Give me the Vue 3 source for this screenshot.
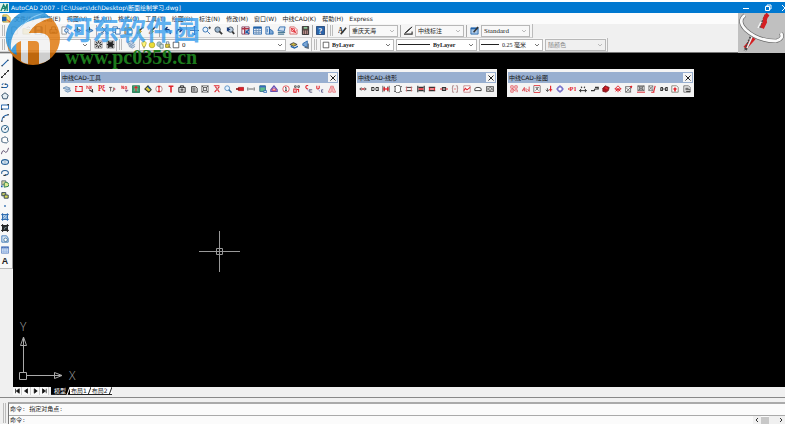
<script setup>
import { h, ref } from 'vue'

const K = '#333', R = '#e0242c', B = '#1c5fa8', L = '#7ba7d6', G = '#3c9a48', Y = '#d9c520', W = '#fff', S = '#8a8a8a'

/* Each glyph is a list of strokes [d, stroke, fill, width] or letters { t, x, y, c, s } on a 10 x 10 grid. */
const glyphs = {
  app: [['M0 0H10V10H0Z', 'none', '#dff3ea'], ['M1 9L4 2L6 6M3 6H7M5 9L8 1V9', '#16836f', 'none', 1.5]],
  doc: [['M1 1H6L9 4V9H1Z', '#b59b2a', '#f6df7a'], ['M0 3H5V8H0Z', 'none', B], ['M5 6L9 9', R]],
  new: [['M2 1H6L8 3V9H2Z', S, W]],
  open: [['M1 3H4L5 4H9V9H1Z', '#9a8420', '#f0d768'], ['M5 2Q7 0 9 2', K]],
  save: [['M1 1H9V9H1Z', '#24405f', '#6f93bd'], ['M3 1H7V4H3ZM3 6H7V9H3Z', 'none', W]],
  print: [['M1 4H9V8H1Z', K, '#ccc'], ['M3 4V1H7V4M3 7H7', K, W]],
  preview: [['M1 1H6V9H1Z', S, W], ['M8 5A2 2 0 1 1 4 5A2 2 0 1 1 8 5M8 7L9.5 9', B, '#cfe4f7']],
  publish: [['M1 5L5 3L9 5L5 7Z', B, L], ['M5 1V5', K]],
  cut: [['M2 1L7 7M8 1L3 7', K], ['M1 8A1.2 1.2 0 1 1 3.4 8A1.2 1.2 0 1 1 1 8M6.6 8A1.2 1.2 0 1 1 9 8A1.2 1.2 0 1 1 6.6 8', B]],
  copy: [['M1 1H6V7H1Z', B, W], ['M4 3H9V9H4Z', B, W]],
  paste: [['M1 2H8V9H1Z', '#8a6b20', '#dcb863'], ['M4 4H9V9H4Z', B, W]],
  brush: [['M8 1L4 5', K, 'none', 1.5], ['M4 4L6 6L3 9L1 8Z', '#a67c1b', '#edc24a']],
  undo: [['M8 9Q9 3 3 4M5 1L2 4L5 7', '#153a80', 'none', 1.5]],
  redo: [['M2 9Q1 3 7 4M5 1L8 4L5 7', '#153a80', 'none', 1.5]],
  pan: [['M5 0V10M0 5H10M3 2L5 0L7 2M3 8L5 10L7 8', B]],
  zoomrt: [['M6.5 4A2.7 2.7 0 1 1 1 4A2.7 2.7 0 1 1 6.5 4M6 6L9 9', B, '#e6f3ff'], ['M7 2H10M8.5 0.5V3.5', K]],
  zoomw: [['M7 4A3 3 0 1 1 1 4A3 3 0 1 1 7 4', '#345', '#9bb5cd'], ['M6 6L9 9', K, 'none', 2]],
  zoomp: [['M8 4A3 3 0 1 1 2 4A3 3 0 1 1 8 4', '#345', '#bcd'], ['M7 6L9 9', K, 'none', 2], ['M1 1L5 4L1 6Z', 'none', '#153a80']],
  props: [['M1 1H9V9H1Z', '#735', W], ['M1 3H9M4 1V9', '#a34', 'none', 1.5], ['M5 5L9 9M5 8L9 4', B, 'none', 1.5]],
  grid: [['M0.5 1H9.5V9H0.5Z', B, '#e6effa'], ['M1 2H9', B, 'none', 2], ['M3.5 2V9M6.5 2V9M1 5H9M1 7H9', '#688db5']],
  palette: [['M1 1H5V9H1Z', B, '#dae8f7'], ['M5 3L9 6V9H5Z', B, '#7ba7d6'], ['M2.5 3V7', B]],
  sheet: [['M1 5L3 1H9L8 6Z', B, '#cde'], ['M1 7H9M1 9H8', '#4c7b95', 'none', 1.5]],
  markup: [['M1 1H6L9 4V9H1Z', '#c66', '#ffe8e8'], ['M3 3H6V6H3ZM2 2L8 8M8 5L5 8', R]],
  calc: [['M1.5 0.5H8.5V9.5H1.5Z', '#222', '#594a44'], ['M3 2H7', '#8cc99a', 'none', 2], ['M3 5V9M5 5V9M7 5V9', '#c99', 'none', 1]],
  help: [['M0.5 0.5H9.5V9.5H0.5Z', '#173c70', '#2b65aa'], { t: '?', x: 2.5, y: 8.5, c: W, s: 9 }],
  style: [{ t: 'A', x: 0, y: 8, c: K, s: 8 }, ['M9 2L5 7L3 9', K, 'none', 1.8]],
  dimstyle: [['M0 9H9V6', K, 'none', 1.3], ['M9 1L4 6L1 8L5 4Z', K, K]],
  tstyle: [['M1 2H9V9H1Z', B, '#a9c9e9'], ['M1 3H9', B, 'none', 1.4], ['M9 1L4 7', K, 'none', 1.7]],
  gear: [['M1 1H9V9H1Z', S, '#ddd'], ['M7 5A2 2 0 1 1 3 5A2 2 0 1 1 7 5M5 1V3M5 7V9M1 5H3M7 5H9M2 2L3.5 3.5M8 2L6.5 3.5M2 8L3.5 6.5M8 8L6.5 6.5', K, 'none', 1]],
  gearset: [['M1 1H9V9H1Z', S, '#bbb'], ['M3 3H7V7H3ZM3 1V9M7 1V9M1 5H9', '#222', '#222', 1.2]],
  layers: [['M0 3L4 1L8 3L5 5ZM1 5L5 7L9 5M2 7L6 9L9 7', '#6f8eb1', '#b9cfe5']],
  bulb: [['M5 0.5Q9 1 7 5L6.3 7H3.7L3 5Q1 1 5 0.5Z', '#a89b20', '#fff37a'], ['M4 8.5H6', K]],
  sun: [['M8.5 5A3.5 3.5 0 1 1 1.5 5A3.5 3.5 0 1 1 8.5 5', '#b0a024', '#eadc37']],
  freeze: [['M7 4A3 3 0 1 1 1 4A3 3 0 1 1 7 4', '#71949a', '#a9c3c7'], ['M5 4H9V9H5Z', '#58757a', '#d5e3e5']],
  lock: [['M2 4H7V8H2Z', '#8a7a12', '#e2cf3d'], ['M3 4V1H6V4M5 6L9 9', '#567']],
  swatch: [['M1.5 1.5H8.5V8.5H1.5Z', K, W]],
  prevlay: [['M1 5L5 3L9 5L5 7Z', K, '#c9b340'], ['M2 7L6 9L10 7', B, 'none', 1.5]],
  laystate: [['M2 4L7 1V8L2 6Z', B, L], ['M4 8L8 9V4', '#567', 'none', 1.4]],
  line: [['M1 9L9 1', B, 'none', 1.3], ['M0.5 8.5H2M8 1.5H9.5', K, 'none', 1.4]],
  xline: [['M1 9L9 1', K, 'none', 1.2], ['M0 9H2M4 5H6M8 1H10', '#111', 'none', 2]],
  pline: [['M1 8H7Q10 6 7 4H5M1 5L3 3', B, 'none', 1.3], ['M0.5 8H2M4.5 4H6', K, 'none', 1.5]],
  polygon: [['M5 1L9 4L7.5 8.5H2.5L1 4Z', '#355268', '#e5eef3', 1.2]],
  rect: [['M0.5 2.5H9.5V7.5H0.5Z', B, W, 1.2], ['M0 8H2M8 2H10', K, 'none', 1.5]],
  arc: [['M1 9Q1 2 9 1', B, 'none', 1.3], ['M0 9H2M2.5 4H4.5M8 1H10', K, 'none', 1.3]],
  circle: [['M9.5 5A4.5 4.5 0 1 1 0.5 5A4.5 4.5 0 1 1 9.5 5M5 5L8 2', '#2d6286', '#edf5fb', 1.2], ['M4 5H6', K, 'none', 1.5]],
  cloud: [['M3 8Q0 8 1 5Q0 2 3 2Q5 0 7 2Q9 2 8 5Q10 7 8 8Q6 10 5 8Q4 9 3 8Z', '#45627c', W, 1.2]],
  spline: [['M0.5 9Q2 2 5 6Q7 9 9.5 1', '#546', 'none', 1.1]],
  ellipse: [['M9.5 5A4.5 3 0 1 1 0.5 5A4.5 3 0 1 1 9.5 5', '#275f94', '#cfe2f2', 1.4], ['M4.5 5H5.5', K]],
  ellarc: [['M1 6Q0 2 5 2Q10 2 9 6Q8 8 5 7', '#275f94', 'none', 1.3], ['M3 8H6', K, 'none', 1.5]],
  insert: [['M1 1H6V6H1Z', '#456', '#d5d2a3'], ['M4 4A3 3 0 1 1 9 8L4 9Z', '#287c51', '#dfe98f', 1.2], ['M1 9V7', B, 'none', 2]],
  block: [['M1 2H6V6H1Z', '#345', '#c3c863', 1.2], ['M4 5H9V9H4Z', '#345', '#dadb55', 1.2]],
  point: [['M4 5H6', B, 'none', 2]],
  hatch: [['M2 2H8V8H2Z', B, '#cce1f2'], ['M2 0V10M8 0V10M0 2H10M0 8H10M3 6L6 3M4 8L8 4', B, 'none', 0.9]],
  gradient: [['M2 2H8V8H2Z', '#122', '#2b3033'], ['M2 0V10M8 0V10M0 2H10M0 8H10', '#222', 'none', 1.2], ['M4 7Q4 4 7 4', '#9aa']],
  region: [['M1 1H7L9 4V9H1Z', B, '#d8e8f6'], ['M8 6A2 2 0 1 1 3.5 6A2 2 0 1 1 8 6', '#255b87', W]],
  table: [['M0.5 1H9.5V9H0.5Z', '#4b72b8', '#dbe8f8'], ['M0.5 2H9.5', '#4b72b8', 'none', 2], ['M3.5 1V9M6.5 1V9M1 5H9M1 7H9', '#86a8dc', 'none', 0.7]],
  mtext: [{ t: 'A', x: 1, y: 9, c: '#222', s: 11, f: 'Liberation Sans, sans-serif' }],
  tLayers: [['M0 4L4 2L9 4L6 6ZM2 7L6 9L10 7L7 5', '#5b83ad', '#b3c9df']],
  tFrame: [['M1 3V8H9V2H5', R, 'none', 1.3], ['M0 2H3', R, 'none', 1.5]],
  tNx: [['M1 1V5M1 1L4 5V1M5 1L7 5M7 1L5 5', R], ['M4 6L9 9M8 5V9', K, 'none', 1.4]],
  tPs: [{ t: 'P', x: 0, y: 8, c: R, s: 9 }, { t: 'ξ', x: 5, y: 8, c: R, s: 9 }],
  tTjs: [['M0 3H4M2 3V8M6 3V7L4 8', K], { t: 's', x: 6, y: 6, c: R, s: 6 }],
  tNo: [['M1 5V1L3 5V1M5 2H7V5H5Z', R], ['M5 7H9M6 9L9 6', '#879', 'none', 1.3]],
  tMap: [['M0.5 1H9.5V9.5H0.5Z', '#248056', '#55c28d', 1.2], ['M5 8V2M3 4L5 2L7 4', R, 'none', 1.3], ['M1 8H9M2 2V7M8 2V7', '#17533d', 'none', 0.6]],
  tTag: [['M1 5L5 1L9 6L6 9Z', '#34392b', '#d7ca39', 1.3], ['M5 2L8 5', B, 'none', 1.5]],
  tBar: [['M9 5A4 4 0 1 1 1 5A4 4 0 1 1 9 5', '#9b6464', W], ['M3.5 2H6.5M3.5 8H6.5M5 2V8', R, 'none', 1.4]],
  tT: [['M2 1.5H8M5 1.5V9.5', R, 'none', 2]],
  tCase: [['M3 3V1H7V3M1 3H9V9H1Z', K, '#ddd', 1.2], ['M5 4V8M3 6H7', K, 'none', 1]],
  tBin: [['M2 2H7L9 4V9H2Z', '#444', '#e0e0e0', 1.2], ['M3 4H7M4 5V8M6 5V8', K]],
  tNet: [['M1 1H9V9H1Z', '#555', '#eee'], ['M1 1L9 9M9 1L1 9', K], ['M7 5A2 2 0 1 1 3 5A2 2 0 1 1 7 5', K, W]],
  tCross: [['M1 1H8M2 9L8 2M3 2L8 9', R, 'none', 1.3], ['M4 5H7', '#c88', 'none', 2]],
  tMag: [['M7 4A3 3 0 1 1 1 4A3 3 0 1 1 7 4', '#5d93c7', '#e4f2ff', 1.2], ['M6 6L9.5 9.5', '#376c9e', 'none', 1.8]],
  tPlug: [['M3 3H9.5V7H3Z', '#a8151b', '#dc1f27'], ['M0 5H4', '#811', 'none', 2]],
  tDim: [['M1 3V7M9 3V7M2 5H8', K]],
  tPic: [['M1 1H8V8H1Z', '#31738b', '#5fbc8d', 1.2], ['M1 2H8', '#3a67c1', 'none', 2], ['M6 7H9.5V9.5H6Z', B, '#dbe7f5']],
  tHouse: [['M5 1L9 6V8H1V6Z', '#6651b0', '#bcb1ea', 1.4], ['M3 7V5H7V7Z', R, W]],
  tRed: [['M9 5A4 4 0 1 1 1 5A4 4 0 1 1 9 5', R, W], ['M4 3H5V7M4 7H6', K, 'none', 1.2]],
  tTen: [['M2 1H4V3H2ZM6 1H8V3H6Z', K], ['M1 5H4V9H1ZM7 5V9M5 6L7 5', R, 'none', 1.3]],
  tSe: [['M4 1Q1 0 1 3Q2 5 4 5', R, 'none', 1.3], ['M5 6H9M6 9H9M6 6V9', '#557', 'none', 1.1], ['M3 6L5 8', '#6b6bd0']],
  tUe: [['M1 1V4Q2 6 4 4V1', R, 'none', 1.3], ['M9 6H7V9H9', '#558', 'none', 1.1], ['M3 6L5 8', '#6b6bd0']],
  tMirror: [['M4 1V9H0.5ZM6 1V9H9.5Z', '#e66b70', '#ffe1e2', 1]],
  pArrow: [['M1 5H9M3 3L1 5L3 7M7 3L9 5L7 7', K], ['M3 5H7', R, 'none', 1.4]],
  pBrk: [['M4 3H1V7H4M6 3H9V7H6', K, 'none', 1.3], ['M3 5H7', K, 'none', 1.2]],
  pGate: [['M1 1V9M3 2V8M7 2V8M9 1V9', K], ['M1 5H9M2 3L4 5L2 7M8 3L6 5L8 7', R, 'none', 1.5]],
  pRing: [['M8 5A3.5 3.5 0 1 1 1.5 5A3.5 3.5 0 1 1 8 5', K, W, 1], ['M0 2H2M8 2H10M0 8H2M8 8H10', K]],
  pBox: [['M1 3H9M1 7H9', K, 'none', 1.2], ['M2 2V8M8 2V8', '#d46d72', 'none', 1.2]],
  pTwin: [['M1 1V9M9 1V9M2 3H8M2 7H8', K, 'none', 1.4], ['M2 5H8', R, 'none', 2]],
  pFlat: [['M1 3H9M1 7H9', K, 'none', 1.6], ['M1 5H9M2 3V7M8 3V7', R, 'none', 1.3]],
  pPin: [['M3 3H7V7H3Z', K, '#999', 1.3], ['M0 5H3M7 5H10', R, 'none', 1.4]],
  pPair: [['M4 1H2V4H1M2 4V9H4M6 1H8V4H9M8 4V9H6', '#a88384', 'none', 1.1], ['M4 5H6', R]],
  pWave: [['M1 1H9V9H1Z', '#b66b6e', W], ['M1 7L3 4L5 6L9 3', R, 'none', 1.3]],
  pDome: [['M1 7V5Q1 3 5 3Q9 3 9 5V7H7M1 7H8', K, W, 1.1]],
  pHatch: [['M0.5 2H9.5V8H0.5Z', K, '#ddd'], ['M1 7L6 2M4 8L9 3M1 3L6 8M5 2L9 7', '#555']],
  dGrid: [['M1 1H4V4H1ZM6 1H9V4H6ZM1 6H4V9H1ZM6 6H9V9', '#e55d63', 'none', 1.1], ['M3 4L7 8', R]],
  dAu: [['M0 8L3 3V8M1 6H3M5 4V8H7M9 2V8M7 5L9 8', '#dd4d54', 'none', 1.1]],
  dK: [['M1 0.5H9M1 9.5H9', R, 'none', 1.1], ['M1 1V9M9 1V9M3 3H7M7 3L3 7M4 4L7 7', '#555']],
  dTurn: [['M3 4V8M1 6L3 8L5 6', '#555', 'none', 1.2], ['M7 1V8M5 6H9', R, 'none', 1.4]],
  dTarget: [['M8 5A3 3 0 1 1 2 5A3 3 0 1 1 8 5', '#6662be', W, 1.5], ['M5 0V3M5 7V10M0 5H3M7 5H10', '#8179d6', 'none', 1.4]],
  dP1: [['M0 5H2M1 4V6', R], { t: 'P1', x: 2, y: 8, c: R, s: 8 }],
  dSpan: [['M0 7H10M2 5V9M8 5V9M3 3H4M6 3H7M3 2V4M7 2V4', K, 'none', 1.2]],
  dTrack: [['M0 7H4L5 5H9V3H5', K, 'none', 1.5]],
  dBlob: [['M1 4L4 1L9 3L8 7L5 9L1 8Z', '#74151a', '#a8161e'], ['M4 3L7 5', R, 'none', 2]],
  dStar: [['M5 1L9 5H1ZM5 4V9M2 8L4 6M8 8L6 6M2 6H8', R, 'none', 1.2]],
  dNetR: [['M0.5 2H7V9H0.5ZM1 3L7 9M7 3L1 9', '#555'], ['M8 1V4M6 2H9', R, 'none', 1.3]],
  dNet: [['M1 1H9V7H1ZM1 1L9 7M9 1L1 7M3 2H7V6H3Z', '#555'], ['M0 9H10', R, 'none', 1.2]],
  dNetS: [['M1 1H6V7H1ZM1 1L6 7M6 1L1 7', '#666'], ['M9 1L7 9M4 9H8', R, 'none', 1.4]],
  dLink: [['M1 3V7H3V3H1M7 3V7H9V3H7M4 5H6', K, 'none', 1.3]],
  dDocR: [['M1 1H7L9 3V9H1Z', '#665', W], ['M3 5H7M5 3V8', R, 'none', 2]],
  dDoc: [['M1 1H7L9 3V9H1Z', '#555', '#eee'], ['M3 4H7M3 6H9M4 8H9', '#444', 'none', 1.3]],
}

const Icon = (p) =>
  h('svg', { viewBox: '0 0 10 10', 'aria-hidden': 'true' },
    glyphs[p.name].map((g) => Array.isArray(g)
      ? h('path', { d: g[0], stroke: g[1], fill: g[2] || 'none', 'stroke-width': g[3] || 0.9 })
      : h('text', { x: g.x, y: g.y, fill: g.c, 'font-size': g.s, 'font-weight': 700, 'font-family': g.f || 'Liberation Serif, serif' }, g.t)))
Icon.props = ['name']

const menus = ['文件(F)', '编辑(E)', '视图(V)', '插入(I)', '格式(O)', '工具(T)', '绘图(D)', '标注(N)', '修改(M)', '窗口(W)', '中线CAD(K)', '帮助(H)', 'Express']
const standard = [
  ['new', 'open', 'save'],
  ['print', 'preview', 'publish', 'publish'],
  ['cut', 'copy', 'paste', 'brush', 'brush'],
  ['undo', 'redo'],
  ['pan', 'zoomrt', 'zoomw', 'zoomp'],
  ['props', 'grid', 'palette', 'sheet', 'markup', 'calc'],
  ['help'],
]
const styles = [
  { icon: 'style', label: '文字样式', value: '重庆天海' },
  { icon: 'dimstyle', label: '标注样式', value: '中线标注' },
  { icon: 'tstyle', label: '表格样式', value: 'Standard' },
]
const layerMarks = ['bulb', 'sun', 'freeze', 'lock', 'swatch']
const draw = ['line', 'xline', 'pline', 'polygon', 'rect', 'arc', 'circle', 'cloud', 'spline', 'ellipse', 'ellarc', 'insert', 'block', 'point', 'hatch', 'gradient', 'region', 'table', 'mtext']
const palettes = ref([
  { id: 'general', title: '中线CAD-工具', icons: ['tLayers', 'tFrame', 'tNx', 'tPs', 'tTjs', 'tNo', 'tMap', 'tTag', 'tBar', 'tT', 'tCase', 'tBin', 'tNet', 'tCross', 'tMag', 'tPlug', 'tDim', 'tPic', 'tHouse', 'tRed', 'tTen', 'tSe', 'tUe', 'tMirror'] },
  { id: 'shapes', title: '中线CAD-线形', icons: ['pArrow', 'pBrk', 'pGate', 'pRing', 'pBox', 'pTwin', 'pFlat', 'pPin', 'pPair', 'pWave', 'pDome', 'pHatch'] },
  { id: 'drawing', title: '中线CAD-绘图', icons: ['dGrid', 'dAu', 'dK', 'dTurn', 'dTarget', 'dP1', 'dSpan', 'dTrack', 'dBlob', 'dStar', 'dNetR', 'dNet', 'dNetS', 'dLink', 'dDocR', 'dDoc'] },
])
const pagers = [
  { label: '第一个', d: 'M2 1V7M7 1L3 4L7 7Z' },
  { label: '上一个', d: 'M6 1L2 4L6 7Z' },
  { label: '下一个', d: 'M3 1L7 4L3 7Z' },
  { label: '最后一个', d: 'M2 1L6 4L2 7ZM7 1V7' },
]
const tabs = ['模型', '布局1', '布局2']
const tab = ref('模型')
const command = ref('')
const close = (id) => { palettes.value = palettes.value.filter((p) => p.id !== id) }
</script>

<template>
  <div class="window">
    <header class="top">
      <div class="title">
        <Icon name="app" class="ico" />
        <span class="name">AutoCAD 2007 - [C:\Users\dcl\Desktop\断面绘制学习.dwg]</span>
        <button class="sys" aria-label="最小化"><svg viewBox="0 0 8 8"><path d="M1 4.5H7" /></svg></button>
        <button class="sys" aria-label="还原"><svg viewBox="0 0 8 8"><path d="M1.5 2.5H5.5V6.5H1.5ZM3 2.5V1H7V5H5.5" /></svg></button>
        <button class="sys" aria-label="关闭"><svg viewBox="0 0 8 8"><path d="M1 1L7 7M7 1L1 7" /></svg></button>
      </div>

      <nav class="menu">
        <Icon name="doc" class="ico" />
        <a v-for="m in menus" :key="m" href="#">{{ m }}</a>
      </nav>

      <div class="bars">
        <div class="row">
          <div class="bar">
            <i class="grip"></i>
            <div v-for="(group, gi) in standard" :key="gi" class="group">
              <button v-for="(n, i) in group" :key="i" :aria-label="n"><Icon :name="n" class="ico" /></button>
            </div>
          </div>
          <div class="bar">
            <i class="grip"></i>
            <div v-for="s in styles" :key="s.label" class="group">
              <button :aria-label="s.label"><Icon :name="s.icon" class="ico" /></button>
              <div class="combo style">
                <select :aria-label="s.label"><option>{{ s.value }}</option></select>
                <svg class="chev" viewBox="0 0 6 6"><path d="M1 2L3 4L5 2" /></svg>
              </div>
            </div>
          </div>
        </div>

        <div class="row">
          <div class="bar">
            <i class="grip"></i>
            <div class="combo space">
              <select aria-label="工作空间"><option></option></select>
              <svg class="chev" viewBox="0 0 6 6"><path d="M1 2L3 4L5 2" /></svg>
            </div>
            <button aria-label="工作空间设置"><Icon name="gear" class="ico" /></button>
            <button aria-label="我的工作空间"><Icon name="gearset" class="ico" /></button>
          </div>
          <div class="bar">
            <i class="grip"></i>
            <button class="wide" aria-label="图层特性"><Icon name="layers" class="ico" /></button>
            <div class="combo layer">
              <Icon v-for="n in layerMarks" :key="n" :name="n" class="ico" />
              <select aria-label="图层"><option>0</option></select>
              <svg class="chev" viewBox="0 0 6 6"><path d="M1 2L3 4L5 2" /></svg>
            </div>
            <button aria-label="上一个图层"><Icon name="prevlay" class="ico" /></button>
            <button aria-label="图层状态"><Icon name="laystate" class="ico" /></button>
          </div>
          <div class="bar">
            <i class="grip"></i>
            <div class="combo color">
              <Icon name="swatch" class="ico" />
              <select aria-label="颜色"><option>ByLayer</option></select>
              <svg class="chev" viewBox="0 0 6 6"><path d="M1 2L3 4L5 2" /></svg>
            </div>
            <div class="combo ltype">
              <i class="rule long"></i>
              <select aria-label="线型"><option>ByLayer</option></select>
              <svg class="chev" viewBox="0 0 6 6"><path d="M1 2L3 4L5 2" /></svg>
            </div>
            <div class="combo weight">
              <i class="rule"></i>
              <select aria-label="线宽"><option>0.25 毫米</option></select>
              <svg class="chev" viewBox="0 0 6 6"><path d="M1 2L3 4L5 2" /></svg>
            </div>
            <div class="combo plot">
              <select aria-label="打印样式" disabled><option>随颜色</option></select>
              <svg class="chev" viewBox="0 0 6 6"><path d="M1 2L3 4L5 2" /></svg>
            </div>
          </div>
        </div>
      </div>

      <svg class="badge" viewBox="0 0 47 40" aria-hidden="true">
        <path d="M0 0H47V40H0Z" fill="#c0c0c0" />
        <path d="M28 2L22 15" stroke="#555" stroke-width="3" fill="none" stroke-dasharray="2 1" />
        <path d="M30 1Q26 5 27 9L24 15" stroke="#d41f22" stroke-width="4" fill="none" />
        <path d="M20 15L23 9" stroke="#f4f4f4" stroke-width="1.5" />
        <path d="M16 25L7 35" stroke="#d41f22" stroke-width="4" />
        <path d="M13 24L7 38" stroke="#444" stroke-width="3" stroke-dasharray="2 1" />
        <path d="M14 24L9 35" stroke="#eee" stroke-width="1.5" />
        <path d="M7 2Q-1 8 8 17Q20 28 38 28Q46 26 43 20" fill="none" stroke="#666" stroke-width="4" />
        <path d="M7 2Q-1 8 8 17Q20 28 38 28Q46 26 43 20" fill="none" stroke="#fafafa" stroke-width="2.8" />
      </svg>
    </header>

    <main class="work">
      <aside class="side">
        <div class="draw">
          <button v-for="n in draw" :key="n" :aria-label="n"><Icon :name="n" class="ico" /></button>
        </div>
      </aside>
      <section class="canvas">
        <div v-for="p in palettes" :key="p.id" class="palette" :class="p.id">
          <div class="cap">
            <span>{{ p.title }}</span>
            <button class="x" aria-label="关闭" @click="close(p.id)"><svg viewBox="0 0 8 8"><path d="M1.5 1.5L6.5 6.5M6.5 1.5L1.5 6.5" /></svg></button>
          </div>
          <div class="tools">
            <button v-for="n in p.icons" :key="n" :aria-label="n"><Icon :name="n" class="ico" /></button>
          </div>
        </div>
        <svg class="cross" viewBox="0 0 41 41" aria-hidden="true"><path d="M0 20.5H41M20.5 0V41M17.5 17.5H23.5V23.5H17.5Z" /></svg>
        <svg class="ucs" viewBox="0 0 80 70" aria-hidden="true">
          <path d="M6.5 55.5H13.5V62.5H6.5ZM10.5 55V20M10.5 20L7.5 28.5H13.5ZM14 58.5H49M49 58.5L41.5 55.5V61.5Z" />
          <text x="7" y="14">Y</text>
          <text x="56" y="63">X</text>
        </svg>
      </section>
    </main>

    <div class="tabs">
      <button v-for="p in pagers" :key="p.label" class="pager" :aria-label="p.label"><svg viewBox="0 0 8 8"><path :d="p.d" /></svg></button>
      <button v-for="t in tabs" :key="t" class="tab" :class="{ on: t === tab }" @click="tab = t">
        <span>{{ t }}</span>
        <svg viewBox="0 0 4 8" aria-hidden="true"><path d="M4 0L1 8" /></svg>
      </button>
    </div>

    <footer class="console">
      <i class="grip"></i>
      <div class="lines">
        <p>命令: 指定对角点:</p>
        <div class="prompt">
          <label for="cmd">命令:</label>
          <input id="cmd" v-model="command" type="text" />
          <button class="scroll" aria-label="向左"><svg viewBox="0 0 8 8"><path d="M5 2L3 4L5 6" /></svg></button>
          <i class="thumb"></i>
          <button class="scroll end" aria-label="向右"><svg viewBox="0 0 8 8"><path d="M3 2L5 4L3 6" /></svg></button>
        </div>
      </div>
    </footer>

    <div class="mark">
      <svg class="logo" viewBox="0 0 56 58" aria-hidden="true">
        <circle cx="28" cy="29" r="27" fill="#e07a10" />
        <path d="M40 4A27 27 0 0 0 2 36Q6 44 12 46Q8 26 24 16Q32 10 46 9Z" fill="#2a94dc" />
        <path d="M6 41Q4 18 28 11Q38 8 46 9Q30 13 24 24H36Q45 25 45 34V50Q40 54 34 55V36Q34 32 30 32H23V55Q18 54 16 52V32Q10 34 6 41Z" fill="#f2f2f2" />
        <path d="M24 24Q30 13 46 9Q38 18 36 24Z" fill="#e07a10" />
        <path d="M12 24Q20 10 40 4Q22 6 12 24Z" fill="#7cc4f2" />
      </svg>
      <div class="words">
        <strong>河东软件园</strong>
        <em>www.pc0359.cn</em>
      </div>
    </div>
  </div>
</template>

<style>
body { margin: 0; }
</style>

<style scoped>
.window { position: relative; display: flex; flex-direction: column; height: 100vh; overflow: hidden; background: #f0f0f0; color: #222; font: 6px/8px "DejaVu Sans", "Noto Sans CJK SC", sans-serif; }
button { display: flex; align-items: center; justify-content: center; flex: none; padding: 0; border: 0; background: none; color: inherit; font: inherit; }
.ico { display: block; flex: none; width: 9px; height: 9px; }
.top { position: relative; border-top: 2px solid #fff; border-bottom: 1px solid #777; }
.title { display: flex; align-items: center; height: 11px; background: #0078d0; color: #fff; }
.title .name { flex: 1; padding-left: 2px; white-space: nowrap; }
.sys { width: 22px; }
.sys:last-child { width: 12px; margin-right: -6px; }
.sys svg { width: 8px; height: 8px; fill: none; stroke: #fff; stroke-width: 1; }
.menu { display: flex; align-items: center; gap: 6px; height: 11px; padding-left: 2px; background: #fcfcfc; }
.menu .ico { margin-right: -3px; }
.menu a { color: #222; text-decoration: none; white-space: nowrap; }
.bars { display: flex; flex-direction: column; }
.row { display: flex; height: 14px; }
.bar { display: flex; align-items: center; height: 13px; border-right: 1px solid #bbb; border-bottom: 1px solid #d0d0d0; background: #f5f5f5; }
.grip { flex: none; align-self: stretch; width: 1px; margin: 1px 2px; border-left: 1px solid #bbb; border-right: 1px solid #bbb; }
.group { display: flex; align-items: center; padding: 0 1px; }
.group + .group { border-left: 1px solid #aaa; }
.bar button { width: 12px; height: 12px; }
.bar .wide { width: 14px; }
.combo { display: flex; align-items: center; box-sizing: border-box; height: 12px; margin: 0 1px; border: 1px solid #b8b8b8; background: #fff; }
.combo select { flex: 1; min-width: 0; height: 10px; padding: 0 2px; border: 0; outline: 0; background: none; color: #222; font: 7px/10px "Liberation Serif", "Noto Sans CJK SC", serif; appearance: none; }
.combo .ico { width: 8px; height: 8px; }
.chev { flex: none; width: 6px; height: 6px; margin: 0 2px; fill: none; stroke: #777; }
.style { width: 49px; background: #f8f8f8; }
.style select { font-size: 6px; }
.group:last-child .style select { font-size: 7px; }
.style .chev, .plot .chev { stroke: #bbb; }
.space { width: 83px; }
.layer { width: 147px; }
.color { width: 74px; }
.color .ico { margin-left: 1px; }
.color select, .ltype select { font-weight: 700; font-size: 6px; }
.ltype { width: 81px; }
.weight { width: 64px; }
.weight select { font-size: 6px; }
.plot { width: 61px; background: #f0f0f0; }
.plot select { color: #888; font-size: 6px; opacity: 1; }
.rule { flex: none; width: 18px; height: 1px; margin: 0 1px; background: #222; }
.rule.long { width: 32px; }
.badge { position: absolute; top: 11px; right: 0; width: 47px; height: 40px; }
.work { display: flex; flex: 1; min-height: 0; }
.side { flex: none; width: 13px; background: #f0f0f0; }
.draw { display: flex; flex-direction: column; padding: 3px 0 2px; border-right: 1px solid #999; border-bottom: 1px solid #bbb; border-top: 1px solid #ccc; background: #f8f8f8; }
.draw button { height: 11px; padding-right: 2px; }
.draw .ico { width: 8px; height: 8px; }
.canvas { position: relative; flex: 1; overflow: hidden; background: #000; }
.palette { position: absolute; top: 16px; box-sizing: border-box; padding: 3px 1px 1px; background: #f4f4f4; }
.palette.general { left: 47px; width: 279px; }
.palette.shapes { left: 343px; width: 141px; }
.palette.drawing { left: 494px; width: 187px; }
.cap { display: flex; align-items: center; justify-content: space-between; height: 11px; padding: 0 1px; background: #98afd0; color: #111; }
.x { width: 9px; height: 9px; background: #f4f4f4; }
.x svg { width: 8px; height: 8px; stroke: #222; fill: none; }
.tools { display: flex; justify-content: space-between; padding: 2px 2px 3px; }
.tools .ico { width: 8px; height: 8px; }
.cross { position: absolute; left: 186px; top: 178px; width: 41px; height: 41px; fill: none; stroke: #999; }
.ucs { position: absolute; left: 0; bottom: 0; width: 80px; height: 70px; }
.ucs path { fill: none; stroke: #aaa; }
.ucs text { fill: #aaa; font: 300 12px "Open Sans", sans-serif; }
.tabs { display: flex; height: 10px; padding-left: 13px; border-bottom: 1px solid #888; background: #f0f0f0; }
.pager { width: 9px; height: 8px; border-right: 1px solid #ccc; background: #fafafa; }
.pager svg { width: 6px; height: 6px; fill: #111; stroke: #111; }
.tab { height: 8px; padding-left: 1px; border-bottom: 1px solid #222; background: #fff; }
.pager + .tab { margin-left: 2px; padding-left: 3px; }
.tab.on { background: #000; color: #fff; }
.tab svg { width: 4px; height: 8px; fill: none; stroke: #222; }
.tab.on svg { stroke: #fff; }
.console { display: flex; padding: 4px 0 0 1px; }
.lines { flex: 1; border-top: 2px solid #aaa; border-left: 1px solid #777; background: #fbfbfb; font: 6px/11px "Liberation Mono", "Noto Sans CJK SC", monospace; }
.lines p { margin: 0; padding-left: 1px; border-bottom: 1px solid #aaa; }
.prompt { display: flex; align-items: center; height: 8px; padding-left: 1px; }
.prompt input { flex: 1; min-width: 0; height: 8px; padding: 0; border: 0; outline: 0; background: none; font: inherit; }
.scroll { width: 8px; height: 8px; background: #f0f0f0; }
.scroll svg { width: 8px; height: 8px; fill: none; stroke: #333; }
.thumb { width: 8px; height: 7px; background: #c8c8c8; }
.scroll.end { width: 16px; justify-content: flex-end; }
.mark { position: absolute; left: 5px; top: 9px; display: flex; gap: 4px; pointer-events: none; }
.logo { width: 56px; height: 58px; opacity: .85; }
.words { display: flex; flex-direction: column; }
.words strong { color: #3a9fee; opacity: .8; font: 700 27px/39px "Noto Sans CJK SC", sans-serif; }
.words em { color: #1c7a1c; font: normal 700 20px/18px "Liberation Serif", serif; }
</style>
